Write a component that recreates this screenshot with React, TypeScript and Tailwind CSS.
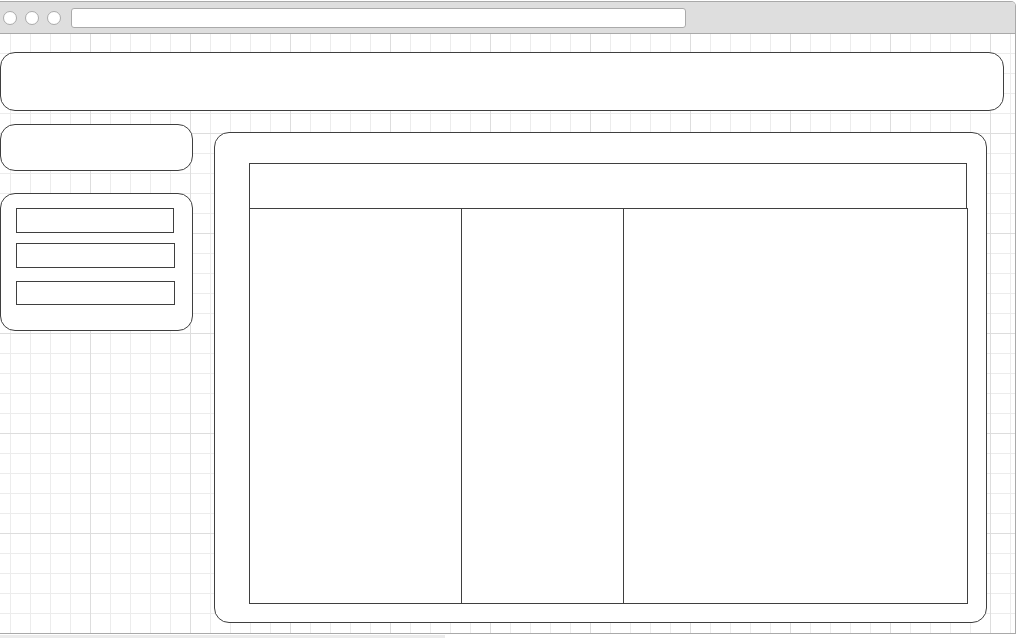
export default function App() {
  return (
    <div className="w-[1018px] h-[638px] bg-white overflow-hidden">
      {/* browser window */}
      <div className="mt-px w-[1016px] h-[633px] border border-l-0 border-[#a9a9a9] rounded-tr-[5px] flex flex-col overflow-hidden">
        {/* title bar */}
        <div className="h-[32px] shrink-0 bg-[#dedede] border-b border-[#a9a9a9] flex items-center pl-[3px] pt-px">
          <div className="flex items-center gap-[8px]">
            <span className="w-[14px] h-[14px] rounded-full bg-white border border-[#aaaaaa]" />
            <span className="w-[14px] h-[14px] rounded-full bg-white border border-[#aaaaaa]" />
            <span className="w-[14px] h-[14px] rounded-full bg-white border border-[#aaaaaa]" />
          </div>
          <div className="ml-[10px] w-[615px] h-[20px] bg-white border border-[#aaaaaa] rounded-[3px]" />
        </div>

        {/* page canvas */}
        <div className="flex-1 [background-image:linear-gradient(to_right,#dddddd_1px,transparent_1px),linear-gradient(to_bottom,#dddddd_1px,transparent_1px),linear-gradient(to_right,#ececec_1px,transparent_1px),linear-gradient(to_bottom,#ececec_1px,transparent_1px)] [background-size:100px_100px,100px_100px,20px_20px,20px_20px] [background-position:90px_99px,90px_99px,10px_19px,10px_19px] pt-[18px]">
          {/* header */}
          <div className="w-[1004px] h-[59px] bg-white border border-[#3f3f3f] rounded-[15px]" />

          <div className="flex items-start gap-[21px] mt-[13px]">
            {/* sidebar */}
            <div className="w-[193px] flex flex-col gap-[22px]">
              <div className="h-[47px] bg-white border border-[#3f3f3f] rounded-[15px]" />
              <div className="h-[138px] bg-white border border-[#3f3f3f] rounded-[15px] pt-[14px] pl-[15px]">
                <div className="w-[158px] h-[25px] border border-[#3f3f3f]" />
                <div className="w-[159px] h-[25px] border border-[#3f3f3f] mt-[10px]" />
                <div className="w-[159px] h-[24px] border border-[#3f3f3f] mt-[13px]" />
              </div>
            </div>

            {/* main panel */}
            <div className="mt-[8px] w-[773px] h-[491px] bg-white border border-[#3f3f3f] rounded-[15px] pt-[30px] pl-[34px]">
              <div className="w-[718px] h-[46px] border border-[#3f3f3f]" />
              <div className="-mt-px w-[719px] h-[396px] border border-[#3f3f3f] flex">
                <div className="w-[212px] h-full border-r border-[#3f3f3f]" />
                <div className="w-[162px] h-full border-r border-[#3f3f3f]" />
                <div className="flex-1 h-full" />
              </div>
            </div>
          </div>
        </div>
      </div>
      <div className="mt-px w-[445px] h-[3px] bg-[#ebebeb]" />
    </div>
  );
}
